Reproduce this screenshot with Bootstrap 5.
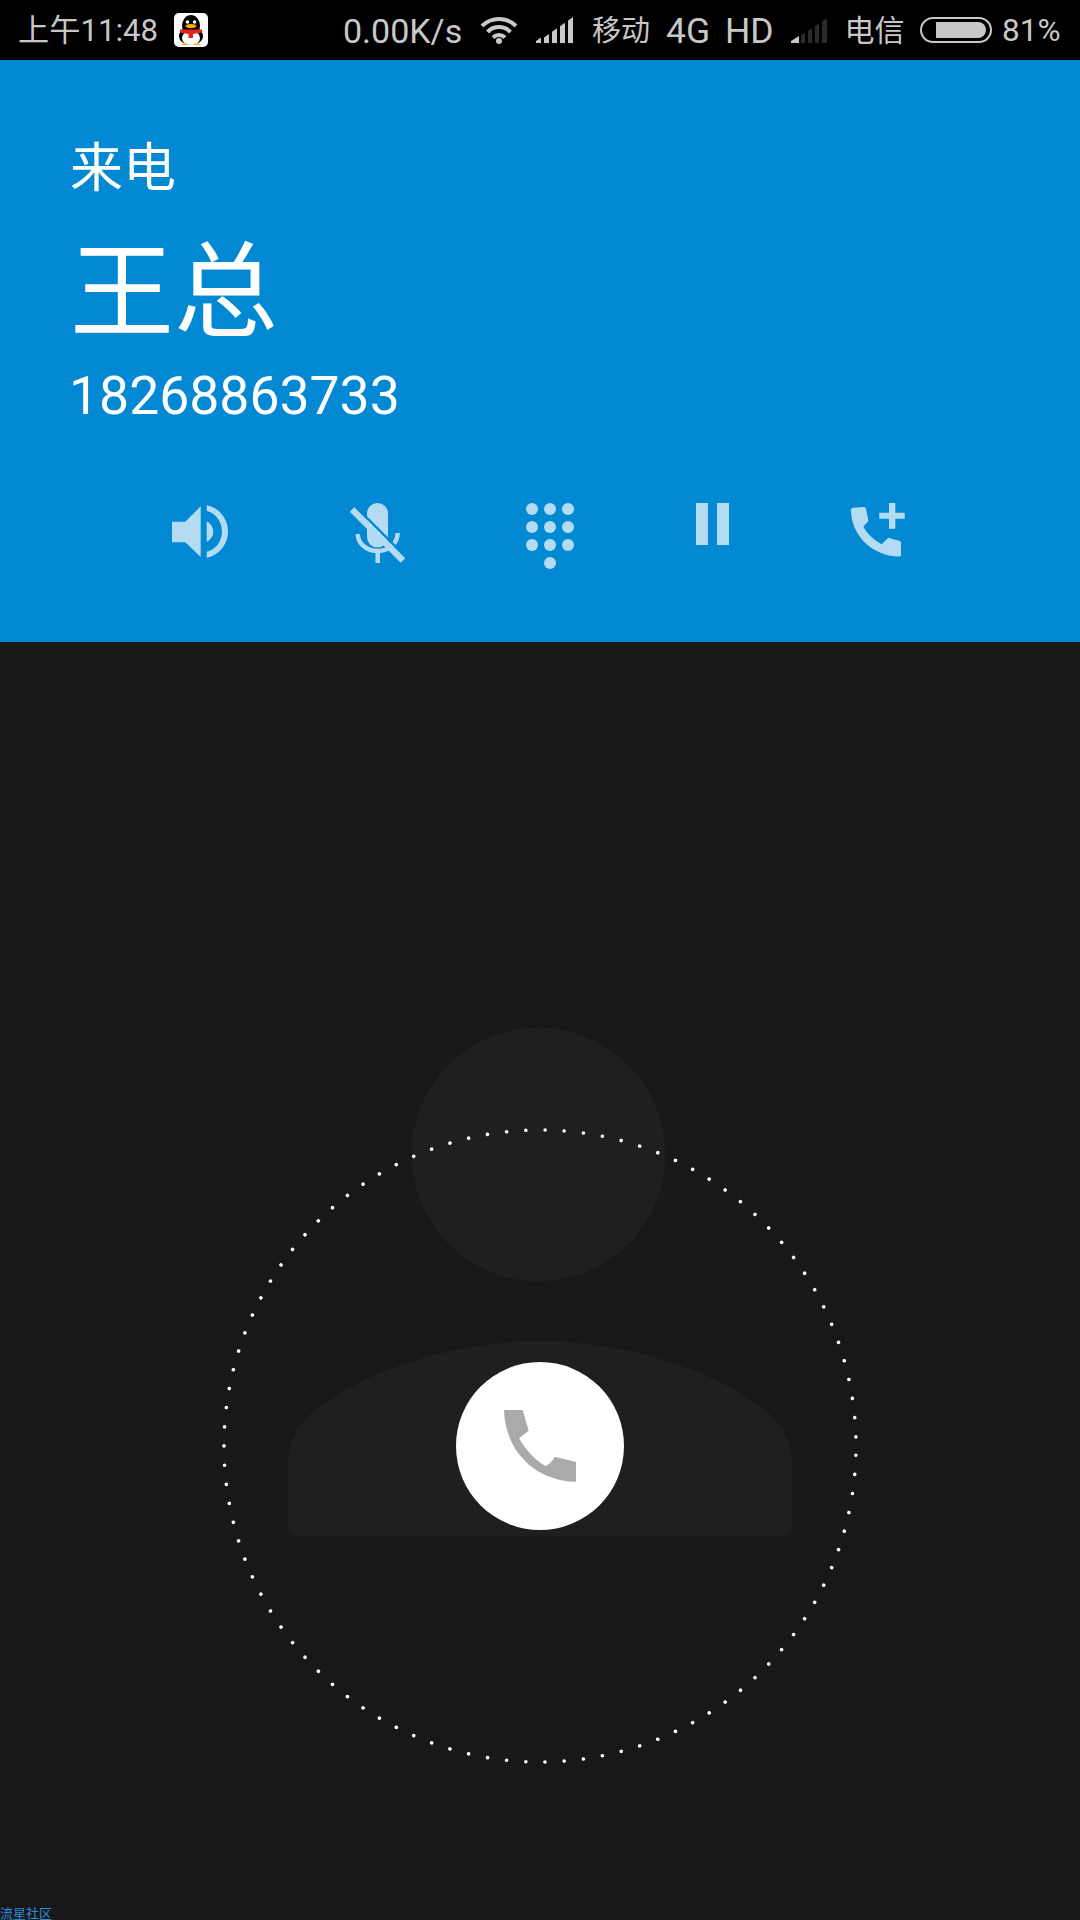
<!doctype html>
<html lang="zh">
<head>
<meta charset="utf-8">
<link href="https://cdn.jsdelivr.net/npm/bootstrap@5.3.0/dist/css/bootstrap.min.css" rel="stylesheet">
<style>
html,body{margin:0;background:#181818}
.phone-page{width:1080px;height:1920px;overflow:hidden;font-family:Roboto,"Noto Sans CJK SC",sans-serif;background:#181818}
.status-strip{height:60px;background:#000;color:#c8c8c8;font-size:32px;line-height:60px;padding:0 18px}
.status-strip svg{display:block;flex:none}
.status-strip span{padding-top:2px;white-space:nowrap}
.st-time{width:156px;font-size:31.200px}
.st-speed{margin-left:135px;width:137px;font-size:34px}
.st-wifi{margin-left:0}
.st-bars{margin-left:18px}
.st-bars-b{margin-left:19px}
.st-carrier{font-size:29px;margin-left:19px;width:58px}
.st-carrier-b{font-size:30px;margin-left:16.500px;width:59.500px}
.st-net{font-size:35.500px;margin-left:16px;width:106px;word-spacing:6px}
.st-battery{margin-left:16px}
.st-pct{font-size:31.500px;margin-left:10px}
.call-panel{height:582px;background:#0388d4;color:#fff;padding:79px 0 0 70px}
.call-label{font-size:53px;line-height:60px}
.call-name{font-size:104px;line-height:110px;margin-top:40px}
.call-number{font-size:53.500px;line-height:60px;margin:17px 0 0 -1px}
.call-actions{gap:121.500px;margin:77px 0 0 102px}
.call-actions svg{display:block;flex:none;fill:#b3dcf2}
.mic-stroke{fill:none;stroke:#b3dcf2;stroke-width:4.500}
.mic-gap{fill:none;stroke:#0388d4;stroke-width:2.500}
.mic-line{fill:none;stroke:#b3dcf2;stroke-width:6.500}
.dial-area{height:1278px}
.dial-art{display:block}
.credit{position:absolute;left:0;bottom:0;font-size:13px;line-height:13px;color:#2a8fdc}
</style>
</head>
<body>
<div class="phone-page">
  <div class="status-strip d-flex align-items-center">
    <span class="st-time">上午11:48</span>
    <svg width="34" height="34" viewBox="0 0 34 34">
      <rect width="34" height="34" rx="5" fill="#fff"/>
      <ellipse cx="17" cy="13" rx="9" ry="11" fill="#000"/>
      <ellipse cx="17" cy="23" rx="12" ry="9" fill="#000"/>
      <ellipse cx="17" cy="25" rx="9" ry="7.500" fill="#fff"/>
      <circle cx="13.500" cy="9" r="1.800" fill="#fff"/><circle cx="20.500" cy="9" r="1.800" fill="#fff"/>
      <ellipse cx="17" cy="13" rx="5.500" ry="2" fill="#f5b301"/>
      <path d="M6 16.500h22v3l-9 1.500v4h-4.500v-4L6 19.500z" fill="#e8201c"/>
      <path d="M7 32c2-2 7-2 8 0zM19 32c1-2 6-2 8 0z" fill="#f5a800"/>
    </svg>
    <span class="st-speed">0.00K/s</span>
    <svg class="st-wifi" width="38" height="28" viewBox="0 0 38 28" fill="none" stroke="#c8c8c8" stroke-width="4">
      <path d="M2 10a24 24 0 0 1 34 0M7.500 16a16 16 0 0 1 23 0M13 21.500a8.500 8.500 0 0 1 12 0"/>
      <circle cx="19" cy="25" r="3" fill="#c8c8c8" stroke="none"/>
    </svg>
    <svg class="st-bars" width="37" height="26" viewBox="0 0 37 26" fill="#c8c8c8">
      <path d="M0 26V24L5 20.500V26zM8 26V20.400L13 16.900V26zM16 26V14.800L21 11.300V26zM24 26V9.200L29 5.700V26zM32 26V3.600L37 0V26z"/>
    </svg>
    <span class="st-carrier">移动</span>
    <span class="st-net">4G HD</span>
    <svg class="st-bars-b" width="37" height="26" viewBox="0 0 37 26">
      <path d="M0 26V24L8 19V26z" fill="#c8c8c8"/>
      <path d="M10 26V18.500L14 15.800V26zM17 26V13.800L21 11.200V26zM24 26V9.200L28 6.500V26zM31 26V4.500L36 1V26z" fill="#2b2b2b"/>
    </svg>
    <span class="st-carrier-b">电信</span>
    <svg class="st-battery" width="72" height="26" viewBox="0 0 72 26">
      <rect x="1" y="1" width="70" height="24" rx="12" fill="none" stroke="#c8c8c8" stroke-width="2"/>
      <path d="M16 5h42a8 8 0 0 1 0 16H16z" fill="#c8c8c8"/>
    </svg>
    <span class="st-pct">81%</span>
  </div>

  <section class="call-panel">
    <div class="call-label">来电</div>
    <div class="call-name">王总</div>
    <div class="call-number">18268863733</div>
    <div class="call-actions d-flex align-items-start">
      <svg width="56" height="56" viewBox="0 0 56 56">
        <path d="M0 18.700H13.300L28.700 3.300V54L13.300 39.300H0z"/>
        <path d="M34.700 18V39Q41.300 35 41.300 28.700T34.700 18z"/>
        <path d="M34.700 2.300C46 4 56 15 56 28.500S46 53 34.700 54.700V48.700C43 47 50 39 50 28.500S43 10 34.700 8z"/>
      </svg>
      <svg width="55" height="60" viewBox="0 0 55 60">
        <path class="mic-stroke" d="M7.700 31C8 41 17 48 27.700 48S47.500 41 47.700 30M27.700 48V60"/>
        <path d="M17 10.500a10.500 10.500 0 0 1 21 0V34a10.500 10.500 0 0 1-21 0z"/>
        <path class="mic-gap" d="M5.200 3.300L56.200 54.300"/>
        <path class="mic-line" d="M2 6.500L53 57.500"/>
      </svg>
      <svg width="48" height="66" viewBox="0 0 48 66">
        <circle cx="6" cy="6" r="6"/><circle cx="24" cy="6" r="6"/><circle cx="42" cy="6" r="6"/>
        <circle cx="6" cy="24" r="6"/><circle cx="24" cy="24" r="6"/><circle cx="42" cy="24" r="6"/>
        <circle cx="6" cy="42" r="6"/><circle cx="24" cy="42" r="6"/><circle cx="42" cy="42" r="6"/>
        <circle cx="24" cy="60" r="6"/>
      </svg>
      <svg width="33" height="42" viewBox="0 0 33 42">
        <rect width="12" height="42"/><rect x="21" width="12" height="42"/>
      </svg>
      <svg width="55" height="55" viewBox="0 0 55 55">
        <path d="M1 7Q1 5 3 4.700L14 4q1.500 0 2 1.500L18.300 17q0 1.500-1 2.500L13.300 23.500C17 31 24 37 31.700 41.300L38.300 34.700 50 38q1 .5 1 2V52q0 1.500-2 1.500C22 53 1 32 1 7z"/>
        <path d="M29.300 9.700H39V0h6.300v9.700h9.400v6H45.300v10H39v-10H29.300z"/>
      </svg>
    </div>
  </section>

  <section class="dial-area position-relative">
    <svg class="dial-art" width="1080" height="1278" viewBox="0 642 1080 1278">
      <g fill="#1f1f1f">
        <circle cx="538.500" cy="1154.500" r="127"/>
        <path d="M288 1470C288 1435 300 1422 318 1408C365 1372 450 1341 540 1341S715 1372 762 1408C780 1422 792 1435 792 1470V1524Q792 1536 780 1536H300Q288 1536 288 1524z"/>
      </g>
      <circle cx="540" cy="1446" r="316" fill="none" stroke="#fff" stroke-width="3.600" stroke-linecap="round" stroke-dasharray="0.01 19.267" transform="rotate(1.67 540 1446)"/>
      <circle cx="540" cy="1446" r="84" fill="#fff"/>
      <path transform="translate(504 1410)" fill="#aaa" d="M0 0H18.700L24.700 20.700 15 28.300C21 39 30 49 41 56Q46 55 51 46.700L72 52V71.700C30 71 1 40 0 0z"/>
    </svg>
    <span class="credit">流星社区</span>
  </section>
</div>
<script src="https://cdn.jsdelivr.net/npm/bootstrap@5.3.0/dist/js/bootstrap.bundle.min.js"></script>
</body>
</html>
